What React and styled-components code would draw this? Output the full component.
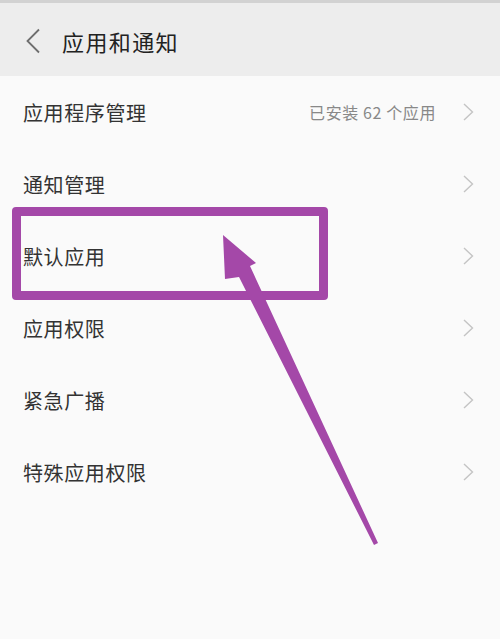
import React from 'react'
import styled, { createGlobalStyle } from 'styled-components'

const GlobalStyle = createGlobalStyle`
  html, body {
    margin: 0;
    padding: 0;
    background: #fafafa;
  }
  body {
    font-family: "Noto Sans CJK SC", "Noto Sans", sans-serif;
  }
`

const items = [
  { title: '应用程序管理', extra: '已安装 62 个应用' },
  { title: '通知管理' },
  { title: '默认应用' },
  { title: '应用权限' },
  { title: '紧急广播' },
  { title: '特殊应用权限' },
]

const Page = () => {
  return (
    <Wrapper>
      <GlobalStyle />
      <Header>
        <BackButton aria-label="back">
          <svg width="16" height="26" viewBox="0 0 16 26">
            <path d="M14 1.5 L2.5 13 L14 24.5" fill="none" stroke="#6e6e6e" strokeWidth="1.8" />
          </svg>
        </BackButton>
        <Title>应用和通知</Title>
      </Header>

      <List>
        {items.map((item) => (
          <Row key={item.title}>
            <RowTitle>{item.title}</RowTitle>
            <RowRight>
              {item.extra && <Extra>{item.extra}</Extra>}
              <svg width="11" height="18" viewBox="0 0 11 18">
                <path d="M1 1 L9.5 9 L1 17" fill="none" stroke="#c4c4c4" strokeWidth="1.4" />
              </svg>
            </RowRight>
          </Row>
        ))}
      </List>

      {/* annotation drawn on top of the screenshot */}
      <Highlight />
      <Arrow width="500" height="639" viewBox="0 0 500 639">
        <polygon
          points="223,235 256,263 250,266 378,543 374,545 239,277 225,279"
          fill="#a448a8"
        />
      </Arrow>
    </Wrapper>
  )
}

const Wrapper = styled.main`
  position: relative;
  width: 500px;
  height: 639px;
  overflow: hidden;
  background: #fafafa;
`

const Header = styled.header`
  display: flex;
  align-items: center;
  height: 70px;
  padding-top: 3px;
  border-top: 3px solid #d2d2d2;
  background: #ededed;
  padding-left: 25px;
  gap: 21px;
`

const BackButton = styled.div`
  display: flex;
  align-items: center;
  width: 16px;
  height: 26px;
`

const Title = styled.h1`
  margin: 0;
  font-size: 22px;
  font-weight: 400;
  color: #222;
  letter-spacing: 1.4px;
`

const List = styled.ul`
  list-style: none;
  margin: 0;
  padding: 0;
`

const Row = styled.li`
  display: flex;
  align-items: center;
  justify-content: space-between;
  height: 72px;
  padding: 0 26px 0 23px;
`

const RowTitle = styled.span`
  font-size: 20px;
  color: #333;
  letter-spacing: 0.6px;
`

const RowRight = styled.div`
  display: flex;
  align-items: center;
  gap: 27px;
`

const Extra = styled.span`
  font-size: 16px;
  color: #888;
  letter-spacing: 0.6px;
`

const Highlight = styled.div`
  position: absolute;
  left: 12px;
  top: 207px;
  width: 298px;
  height: 75px;
  border: 9px solid #a448a8;
  border-radius: 4px;
`

const Arrow = styled.svg`
  position: absolute;
  left: 0;
  top: 0;
  pointer-events: none;
`

export default Page
